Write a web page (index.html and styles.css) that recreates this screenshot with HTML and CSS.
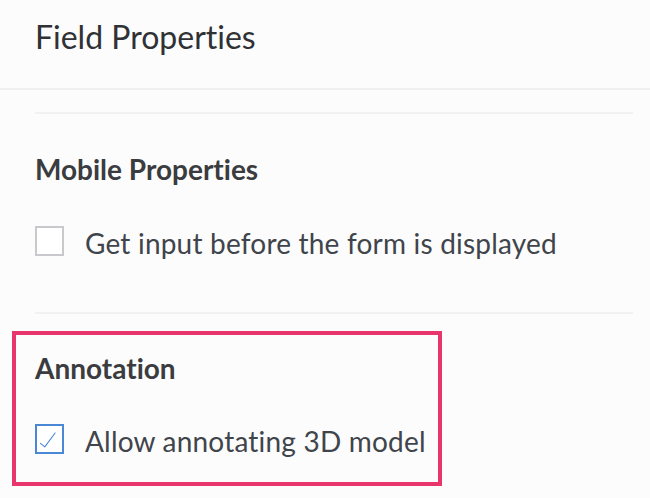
FILE: index.html
```html
<!DOCTYPE html>
<html lang="en">
<head>
    <meta charset="UTF-8">
    <meta name="viewport" content="width=device-width, initial-scale=1.0">
    <title>Field Properties</title>
    <link rel="stylesheet" href="styles.css">
</head>
<body>
    <header class="panel-header">
        <h1>Field Properties</h1>
    </header>
    <main class="panel-body">
        <!-- Mobile Properties -->
        <section class="prop-section">
            <h3>Mobile Properties</h3>
            <label class="check-row">
                <span class="check-box"></span>
                <span class="check-label">Get input before the form is displayed</span>
            </label>
        </section>

        <!-- Annotation -->
        <section class="prop-section annotation">
            <div class="highlight">
                <h3>Annotation</h3>
                <label class="check-row">
                    <span class="check-box checked">
                        <svg viewBox="0 0 29 29" width="27" height="27">
                            <path d="M4 19 L9 23 L21 7" fill="none" stroke="#4a88d6" stroke-width="1.3" stroke-linecap="round" stroke-linejoin="round"/>
                        </svg>
                    </span>
                    <span class="check-label">Allow annotating 3D model</span>
                </label>
            </div>
        </section>
    </main>
</body>
</html>
```

FILE: styles.css
```css
/* General Styles */
body {
    font-family: Lato, 'Open Sans', sans-serif;
    font-variant-ligatures: none;
    margin: 0;
    padding: 0;
    background: #fcfcfc;
    color: #333;
}

.panel-header {
    height: 70px;
    padding: 18px 0 0 35px;
    border-bottom: 2px solid #f0f0f0;
}

.panel-header h1 {
    margin: 0;
    font-size: 32px;
    font-weight: 400;
    line-height: 38px;
    color: #2f3134;
}

.panel-body {
    padding: 22px 17px 0 35px;
}

.prop-section {
    border-top: 2px solid #f1f1f1;
    padding: 40px 0 54px;
}

.prop-section h3 {
    margin: 0 0 42px;
    font-size: 28px;
    font-weight: 700;
    line-height: 30px;
    color: #3a3c40;
}

.check-row {
    display: flex;
    align-items: flex-start;
    gap: 21px;
}

.check-box {
    box-sizing: border-box;
    width: 29px;
    height: 30px;
    border: 2px solid #c9c9cd;
    background: #fff;
    display: flex;
    align-items: center;
    justify-content: center;
}

.check-box.checked {
    border-color: #4a88d6;
}

.check-label {
    margin-top: 2px;
    font-size: 28px;
    line-height: 30px;
    letter-spacing: 0.2px;
    color: #40444b;
}

/* Highlight box drawn round the annotation section */
.annotation {
    padding: 17px 0 0;
}

.highlight {
    width: 430px;
    box-sizing: border-box;
    margin-left: -23px;
    padding: 18px 0 26px 19px;
    border: 4px solid #e8356c;
}

.highlight h3 {
    margin-bottom: 41px;
}
```
